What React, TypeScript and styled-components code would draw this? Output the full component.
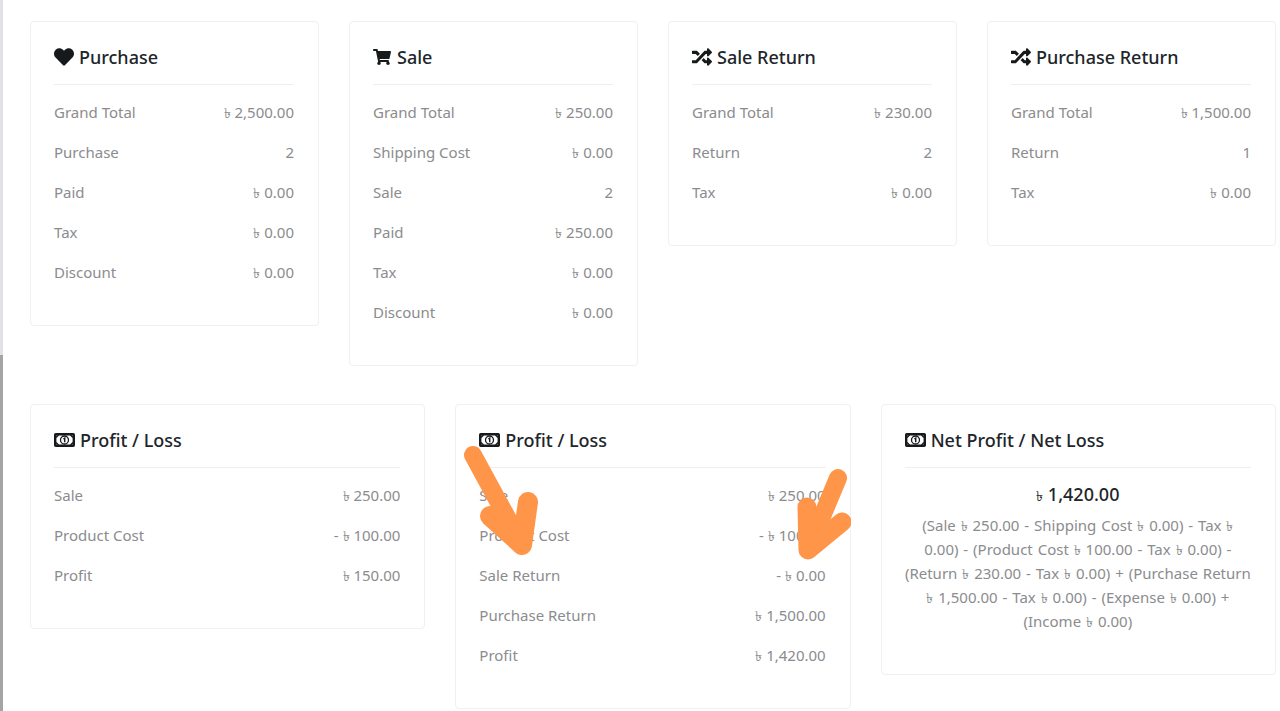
import styled, { createGlobalStyle } from "styled-components";
import { FaHeart, FaShoppingCart, FaRandom } from "react-icons/fa";
import type { ReactNode } from "react";

const GlobalStyle = createGlobalStyle`
  html, body {
    margin: 0;
    height: 100%;
    background: #fff;
    overflow: hidden;
  }
  body {
    font-family: "Noto Sans", "Open Sans", sans-serif;
    font-size: 15px;
    color: #8b8c8e;
  }
`;

const Page = styled.div`
  display: flex;
  height: 711px;
  overflow: hidden;
`;

const ScrollRail = styled.div`
  flex: 0 0 3px;
  height: 711px;
  background: linear-gradient(#e2e2e6 0 355px, #a4a4a4 355px);
`;

const Content = styled.main`
  flex: 1;
  padding: 21px 4px 0 27px;
`;

const TopRow = styled.section`
  display: grid;
  grid-template-columns: repeat(4, 1fr);
  gap: 30px;
  align-items: start;
  margin-bottom: 38px;
`;

const BottomRow = styled.section`
  display: grid;
  grid-template-columns: repeat(3, 1fr);
  gap: 30px;
  align-items: start;
`;

const Card = styled.article`
  position: relative;
  box-sizing: border-box;
  background: #fff;
  border: 1px solid #eff0f2;
  border-radius: 4px;
  padding: 22px 24px 33px 23px;
`;

const Title = styled.h3`
  display: flex;
  align-items: center;
  gap: 5px;
  margin: 0 0 7px;
  padding-bottom: 14px;
  height: 26px;
  border-bottom: 1px solid #eeeff1;
  font-size: 18px;
  line-height: 26px;
  font-weight: 500;
  color: #212529;

  svg {
    flex: none;
    font-size: 20px;
    color: #17191b;
  }
`;

const CartIcon = styled(FaShoppingCart)`
  && {
    font-size: 18px;
    margin-right: 1px;
  }
`;

const Row = styled.div`
  display: flex;
  justify-content: space-between;
  align-items: center;
  height: 40px;
  line-height: 40px;
`;

const Taka = styled.span`
  font-size: 14px;
  line-height: 1;
`;

const NetBody = styled.div`
  text-align: center;
  line-height: 24px;
  word-spacing: 1px;
  padding: 4px 0 8px;
`;

const NetAmount = styled.div`
  font-size: 18px;
  line-height: 30px;
  font-weight: 500;
  word-spacing: 0;
  color: #212529;
  margin-bottom: 4px;
`;

const Arrows = styled.svg`
  position: absolute;
  left: -1px;
  top: -1px;
  pointer-events: none;
`;

const MoneyIcon = () => (
  <svg width="21" height="14" viewBox="0 0 21 14" fill="none" stroke="currentColor">
    <rect x="1.2" y="1.2" width="18.6" height="11.6" rx="0.6" strokeWidth="2.4" />
    <circle cx="10.5" cy="7" r="4" strokeWidth="1.3" />
    <path d="M9.4 6 L10.7 5.1 V9.2" strokeWidth="1.5" />
    <path d="M2 4.5 L4.5 2 M16.5 2 L19 4.5 M2 9.5 L4.5 12 M16.5 12 L19 9.5" strokeWidth="1.4" />
  </svg>
);

const Tk = () => <Taka>৳</Taka>;

const Money = ({ v }: { v: string }) => (
  <span>
    <Tk /> {v}
  </span>
);

type Item = [string, ReactNode];

const StatCard = ({ icon, title, items, children }: { icon: ReactNode; title: string; items: Item[]; children?: ReactNode }) => (
  <Card>
    <Title>
      {icon}
      {title}
    </Title>
    {items.map(([label, value]) => (
      <Row key={label}>
        <span>{label}</span>
        <span>{value}</span>
      </Row>
    ))}
    {children}
  </Card>
);

const m = (v: string) => <Money v={v} />;
const minus = (v: string) => (
  <>
    - <Money v={v} />
  </>
);

export default function App() {
  return (
    <Page>
      <GlobalStyle />
      <ScrollRail />
      <Content>
        <TopRow>
          <StatCard
            icon={<FaHeart />}
            title="Purchase"
            items={[
              ["Grand Total", m("2,500.00")],
              ["Purchase", "2"],
              ["Paid", m("0.00")],
              ["Tax", m("0.00")],
              ["Discount", m("0.00")],
            ]}
          />
          <StatCard
            icon={<CartIcon />}
            title="Sale"
            items={[
              ["Grand Total", m("250.00")],
              ["Shipping Cost", m("0.00")],
              ["Sale", "2"],
              ["Paid", m("250.00")],
              ["Tax", m("0.00")],
              ["Discount", m("0.00")],
            ]}
          />
          <StatCard
            icon={<FaRandom />}
            title="Sale Return"
            items={[
              ["Grand Total", m("230.00")],
              ["Return", "2"],
              ["Tax", m("0.00")],
            ]}
          />
          <StatCard
            icon={<FaRandom />}
            title="Purchase Return"
            items={[
              ["Grand Total", m("1,500.00")],
              ["Return", "1"],
              ["Tax", m("0.00")],
            ]}
          />
        </TopRow>
        <BottomRow>
          <StatCard
            icon={<MoneyIcon />}
            title="Profit / Loss"
            items={[
              ["Sale", m("250.00")],
              ["Product Cost", minus("100.00")],
              ["Profit", m("150.00")],
            ]}
          />
          <StatCard
            icon={<MoneyIcon />}
            title="Profit / Loss"
            items={[
              ["Sale", m("250.00")],
              ["Product Cost", minus("100.00")],
              ["Sale Return", minus("0.00")],
              ["Purchase Return", m("1,500.00")],
              ["Profit", m("1,420.00")],
            ]}
          >
            <Arrows width="396" height="304" viewBox="455 404 396 304" fill="none" stroke="#ff9548" strokeLinecap="round" strokeLinejoin="round">
              <path d="M473 455 L522 545" strokeWidth="18" />
              <path d="M528 502 L522 545 L490 516" strokeWidth="20" />
              <path d="M838 478 L808 550" strokeWidth="18" />
              <path d="M807 507 L808 550 L842 522" strokeWidth="19" />
            </Arrows>
          </StatCard>
          <Card>
            <Title>
              <MoneyIcon />
              Net Profit / Net Loss
            </Title>
            <NetBody>
              <NetAmount>
                <Tk /> 1,420.00
              </NetAmount>
              (Sale <Tk /> 250.00 - Shipping Cost <Tk /> 0.00) - Tax <Tk /> 0.00) - (Product Cost <Tk /> 100.00 - Tax <Tk /> 0.00) - (Return <Tk /> 230.00 - Tax <Tk /> 0.00) + (Purchase Return <Tk /> 1,500.00 - Tax <Tk /> 0.00) - (Expense <Tk /> 0.00) + (Income <Tk /> 0.00)
            </NetBody>
          </Card>
        </BottomRow>
      </Content>
    </Page>
  );
}
